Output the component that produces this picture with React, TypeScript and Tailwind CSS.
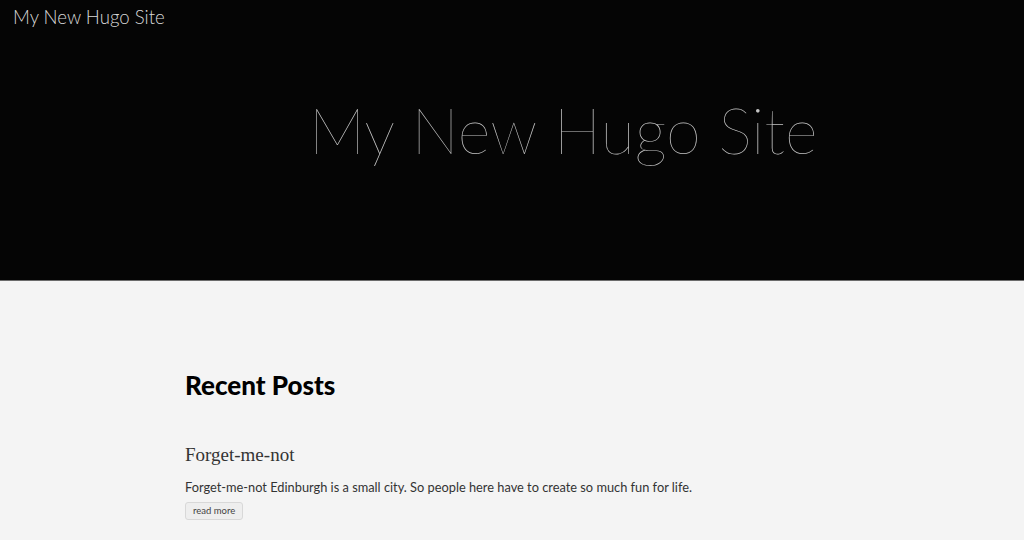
export default function App() {
  return (
    <div className="w-[1024px] h-[540px] overflow-hidden bg-[#f4f4f4]" style={{ fontFamily: 'Lato, "Open Sans", sans-serif' }}>
      <header className="h-[281px] bg-[#050505] border-b border-[#6b6b6b] flex flex-col">
        <div className="pl-[13px] pt-[4px] text-[18.6px] leading-[26px] font-light text-[#d8d8d8]">My New Hugo Site</div>
        <div className="pl-[309px] pt-[63px] text-[63px] leading-[74px] font-thin text-[#c4c4c4]">My New Hugo Site</div>
      </header>
      <main className="pl-[185px] pt-[88px]">
        <h2 className="text-[26px] leading-[32px] font-black text-black">Recent Posts</h2>
        <h3 className="mt-[42px] text-[19px] leading-[24px] text-[#333]" style={{ fontFamily: '"Liberation Serif", serif' }}>Forget-me-not</h3>
        <p className="mt-[11px] text-[12.8px] leading-[18px] text-[#333]">Forget-me-not Edinburgh is a small city. So people here have to create so much fun for life.</p>
        <button className="mt-[3px] h-[18px] px-[7px] text-[9.5px] leading-[16px] text-[#444] bg-[#eeeeee] border border-[#d8d8d8] rounded-[3px]">read more</button>
      </main>
    </div>
  );
}
